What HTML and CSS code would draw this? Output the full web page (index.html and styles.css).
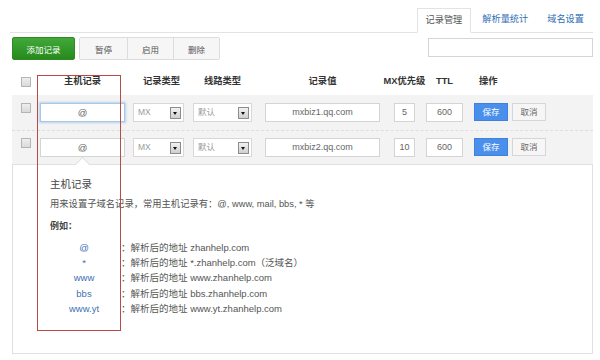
FILE: index.html
```html
<!DOCTYPE html>
<html lang="zh">
<head>
<meta charset="utf-8">
<link rel="stylesheet" href="styles.css">
</head>
<body>
<div class="page">
  <div class="tabs">
    <span class="tab active">记录管理</span>
    <span class="tab">解析量统计</span>
    <span class="tab">域名设置</span>
  </div>
  <div class="toolbar">
    <button class="btn-add">添加记录</button>
    <div class="btn-group">
      <button class="gbtn">暂停</button>
      <button class="gbtn">启用</button>
      <button class="gbtn">删除</button>
    </div>
    <div class="search"></div>
  </div>

  <div class="grid head">
    <div class="c-chk"><span class="chk"></span></div>
    <div class="h-host">主机记录</div>
    <div class="h-type">记录类型</div>
    <div class="h-line">线路类型</div>
    <div class="h-val">记录值</div>
    <div class="h-mx">MX优先级</div>
    <div class="h-ttl">TTL</div>
    <div class="h-op">操作</div>
  </div>

  <div class="rows">
    <div class="grid row">
      <div class="c-chk"><span class="chk"></span></div>
      <div class="inp host focus">@</div>
      <div class="sel type"><span>MX</span><i class="dd"></i></div>
      <div class="sel line"><span>默认</span><i class="dd"></i></div>
      <div class="inp val">mxbiz1.qq.com</div>
      <div class="inp mx">5</div>
      <div class="inp ttl">600</div>
      <div class="ops"><span class="b-save">保存</span><span class="b-cancel">取消</span></div>
    </div>
    <div class="grid row second">
      <div class="c-chk"><span class="chk"></span></div>
      <div class="inp host">@</div>
      <div class="sel type"><span>MX</span><i class="dd"></i></div>
      <div class="sel line"><span>默认</span><i class="dd"></i></div>
      <div class="inp val">mxbiz2.qq.com</div>
      <div class="inp mx">10</div>
      <div class="inp ttl">600</div>
      <div class="ops"><span class="b-save">保存</span><span class="b-cancel">取消</span></div>
    </div>
  </div>

  <div class="tip">
    <i class="arrow"></i>
    <div class="tip-title">主机记录</div>
    <div class="tip-desc">用来设置子域名记录，常用主机记录有：@, www, mail, bbs, * 等</div>
    <div class="tip-eg">例如：</div>
    <div class="eg-list">
      <span class="eg-k">@</span><span class="eg-v">：解析后的地址 zhanhelp.com</span>
      <span class="eg-k">*</span><span class="eg-v">：解析后的地址 *.zhanhelp.com（泛域名）</span>
      <span class="eg-k">www</span><span class="eg-v">：解析后的地址 www.zhanhelp.com</span>
      <span class="eg-k">bbs</span><span class="eg-v">：解析后的地址 bbs.zhanhelp.com</span>
      <span class="eg-k">www.yt</span><span class="eg-v">：解析后的地址 www.yt.zhanhelp.com</span>
    </div>
  </div>

  <div class="annot"></div>
</div>
</body>
</html>
```

FILE: styles.css
```css
* { box-sizing: border-box; }
html, body { margin: 0; padding: 0; background: #fff; }
body {
  font-family: "Liberation Sans", "Noto Sans CJK SC", sans-serif;
  color: #555;
  font-size: 9px;
  line-height: 1;
}
.page { position: relative; width: 600px; height: 360px; overflow: hidden; }

/* tabs */
.tabs {
  display: flex;
  justify-content: flex-end;
  gap: 3px;
  margin: 0 7px 0 10px;
  padding: 8px 1px 0 0;
  border-bottom: 1px solid #e3e3e3;
  height: 33px;
}
.tab {
  display: flex;
  align-items: center;
  padding: 0 8px;
  height: 24px;
  font-size: 9.2px;
  color: #2f6db5;
}
.tab.active {
  color: #555;
  border: 1px solid #e3e3e3;
  border-bottom: 1px solid #fff;
  margin-bottom: -1px;
  height: 25px;
  background: #fff;
}

/* toolbar */
.toolbar {
  display: flex;
  align-items: flex-start;
  margin-top: 4px;
  padding: 0 7px 0 12px;
  height: 23px;
}
button { font-family: inherit; margin: 0; cursor: pointer; }
.btn-add {
  width: 63px;
  height: 23px;
  border: 1px solid #2f8a23;
  border-radius: 2px;
  background: linear-gradient(#43a83a, #268a1c);
  color: #fff;
  font-size: 8.5px;
  padding: 0;
}
.btn-group {
  display: flex;
  margin-left: 4px;
  border: 1px solid #dcdcdc;
  border-radius: 2px;
  background: #f6f6f6;
}
.gbtn {
  width: 46px;
  height: 21px;
  border: 0;
  border-left: 1px solid #dcdcdc;
  background: #f6f6f6;
  color: #555;
  font-size: 8.5px;
  padding: 0;
}
.gbtn:first-child { border-left: 0; width: 47px; }
.search {
  margin-left: auto;
  margin-top: 1px;
  width: 165px;
  height: 19px;
  border: 1px solid #d5d5d5;
  background: #fff;
}

/* table grid */
.grid {
  display: grid;
  grid-template-columns: 28px 93px 60px 72px 129px 32px 48px 1fr;
  align-items: center;
  margin: 0 7px 0 12px;
}
.head {
  margin-top: 8px;
  height: 27px;
  color: #333;
  font-weight: bold;
  font-size: 9.3px;
}
.head > div { text-align: center; }
.h-host { width: 85px; }
.h-type { width: 57px; }
.h-line { width: 59px; }
.h-val { width: 115px; padding-left: 0; }
.h-mx { width: 21px; white-space: nowrap; display: flex; justify-content: center; }
.h-ttl { width: 37px; }
.head > .h-op { text-align: left; padding-left: 5px; }

.c-chk { padding-left: 9px; display: flex; align-items: center; }
.chk {
  display: block;
  width: 10px;
  height: 10px;
  border: 1px solid #b5b5b5;
  background: linear-gradient(#eee, #dadada);
}

.rows {
  margin: 0 7px 0 12px;
  background: #f3f3f3;
}
.rows .grid { margin: 0; }
.row { height: 35px; padding-top: 8px; align-items: start; }
.row.second { height: 34px; border-top: 1px dashed #dedede; padding-top: 7px; }

.inp {
  height: 19px;
  border: 1px solid #d4d4d4;
  background: #fff;
  display: flex;
  align-items: center;
  justify-content: center;
  color: #666;
  font-size: 9px;
}
.inp.host { width: 85px; font-size: 9.5px; }
.inp.focus { border-color: #a8c8ea; box-shadow: 0 0 2px 1px rgba(120, 170, 230, .45); }
.inp.val { width: 115px; }
.inp.mx { width: 21px; }
.inp.ttl { width: 37px; }

.sel {
  height: 19px;
  border: 1px solid #d8d8d8;
  background: #fff;
  display: flex;
  align-items: center;
  justify-content: space-between;
  padding: 0 2px 0 4px;
  color: #9a9a9a;
  font-size: 8.5px;
}
.sel.type { width: 51px; }
.sel.line { width: 59px; }
.dd {
  position: relative;
  display: block;
  width: 11px;
  height: 12px;
  border: 1px solid #8c8c8c;
  background: linear-gradient(#f2f2f2, #cfcfcf);
}
.dd::after {
  content: "";
  position: absolute;
  left: 2px;
  top: 4px;
  border-left: 2.5px solid transparent;
  border-right: 2.5px solid transparent;
  border-top: 3px solid #111;
}

.ops { display: flex; gap: 4px; }
.b-save, .b-cancel {
  display: flex;
  align-items: center;
  justify-content: center;
  width: 34px;
  height: 18px;
  font-size: 8.5px;
}
.b-save { background: #4a8fec; color: #fff; border: 1px solid #3f82dc; }
.b-cancel { background: #f6f6f6; color: #666; border: 1px solid #d6d6d6; }

/* tooltip */
.tip {
  position: relative;
  margin: 0 7px 0 12px;
  height: 190px;
  border: 1px solid #e0e0e0;
  background: #fff;
  padding: 13px 0 0 37px;
}
.arrow {
  position: absolute;
  left: 64px;
  top: -6px;
  width: 11px;
  height: 11px;
  background: #fff;
  border-left: 1px solid #e0e0e0;
  border-top: 1px solid #e0e0e0;
  transform: rotate(45deg);
}
.tip-title { font-size: 10.5px; color: #444; line-height: 12px; }
.tip-desc { margin-top: 8px; font-size: 9.3px; color: #555; line-height: 12px; }
.tip-eg { margin-top: 10px; font-size: 9px; font-weight: bold; color: #444; line-height: 12px; }
.eg-list {
  margin-top: 10px;
  display: grid;
  grid-template-columns: 68px 1fr;
  column-gap: 3px;
  row-gap: 3.2px;
  font-size: 9.5px;
  line-height: 12px;
}
.eg-k { text-align: center; color: #3f70b5; }
.eg-v { color: #555; }

/* annotation box */
.annot {
  position: absolute;
  left: 37px;
  top: 75px;
  width: 84px;
  height: 256px;
  border: 1px solid #b84a4a;
  pointer-events: none;
}
```
